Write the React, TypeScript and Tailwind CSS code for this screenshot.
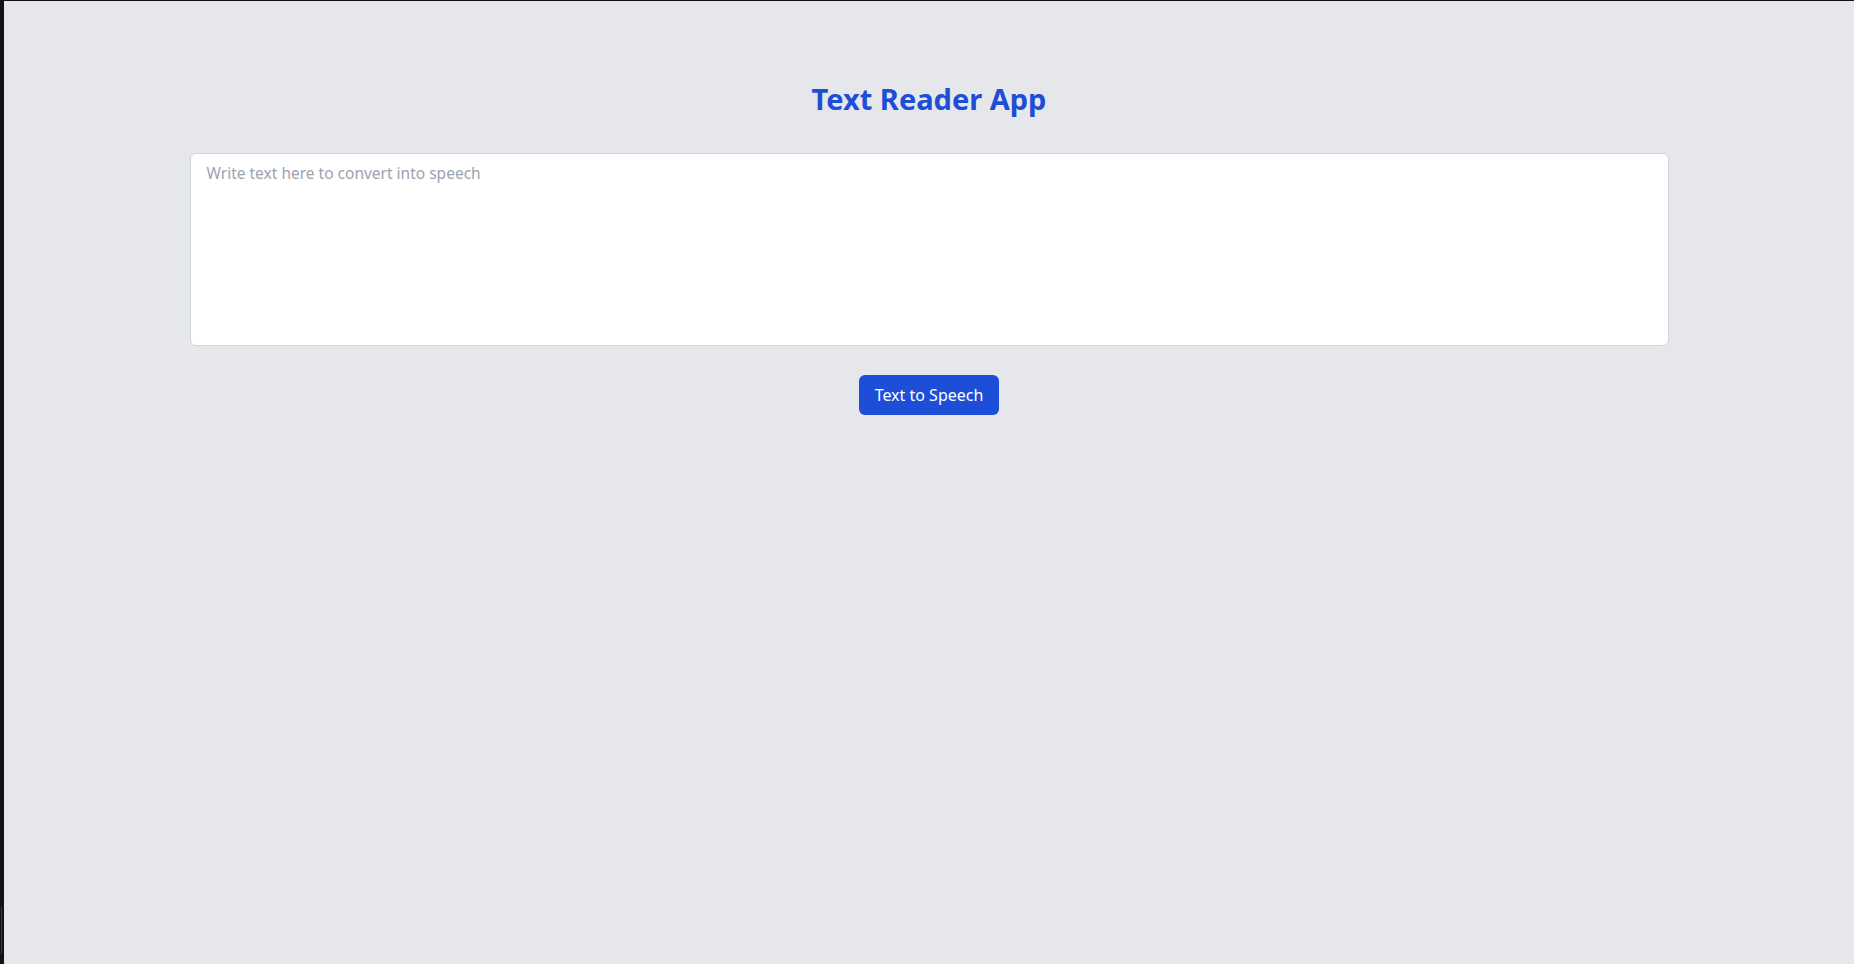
import { useState } from "react";

export default function App() {
  const [text, setText] = useState("");

  const speak = () => {
    if (!text.trim() || typeof window === "undefined" || !("speechSynthesis" in window)) return;
    window.speechSynthesis.speak(new SpeechSynthesisUtterance(text));
  };

  return (
    <div className="flex h-[964px] w-full border-t border-[#111213] bg-[#e5e7eb] font-['Noto_Sans',sans-serif]">
      {/* window edge */}
      <div className="flex w-1 shrink-0 flex-col bg-[#111213]">
        <div className="mt-[906px] ml-px h-[47px] w-px bg-[#3a3b3d]" />
      </div>

      <main className="flex flex-1 flex-col items-center pt-[80px]">
        <h1 className="text-[29px] leading-9 font-bold text-[#1d4ed8]">Text Reader App</h1>

        <textarea
          value={text}
          onChange={(e) => setText(e.target.value)}
          placeholder="Write text here to convert into speech"
          className="mt-9 h-[193px] w-[1479px] resize-none rounded-md border border-[#d1d5db] bg-white px-4 py-2 text-[15.5px] text-gray-800 placeholder:text-[#9ca3af] outline-none"
        />

        <button
          onClick={speak}
          className="mt-[29px] h-10 w-[140px] rounded-md bg-[#1d4ed8] text-base text-white"
        >
          Text to Speech
        </button>
      </main>
    </div>
  );
}
